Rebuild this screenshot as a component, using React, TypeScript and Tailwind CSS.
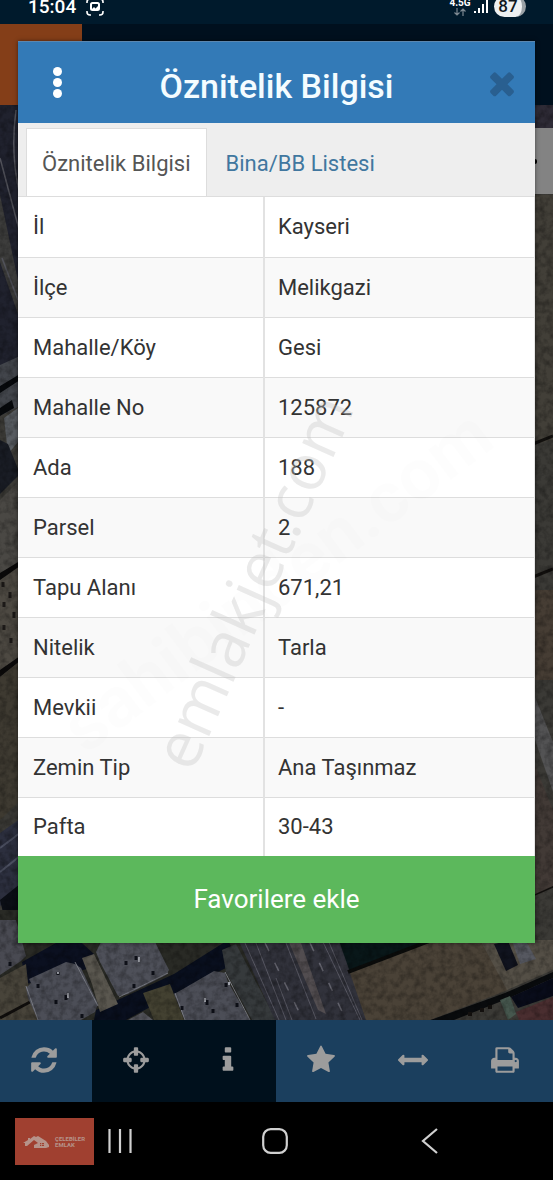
import React, { useState } from 'react';
import clsx from 'clsx';

const ICONS = {
    refresh: 'M1639 1056q0 5-1 7-64 268-268 434.5t-478 166.5q-146 0-282.5-55t-243.5-157l-129 129q-19 19-45 19t-45-19-19-45v-448q0-26 19-45t45-19h448q26 0 45 19t19 45-19 45l-137 137q71 66 161 102t187 36q134 0 250-65t186-179q11-17 53-117 8-23 30-23h192q13 0 22.5 9.5t9.5 22.5zm25-800v448q0 26-19 45t-45 19h-448q-26 0-45-19t-19-45 19-45l138-138q-148-137-349-137-134 0-250 65t-186 179q-11 17-53 117-8 23-30 23h-199q-13 0-22.5-9.5t-9.5-22.5v-7q65-268 270-434.5t480-166.5q146 0 284 55.5t245 156.5l130-129q19-19 45-19t45 19 19 45z',
    crosshairs: 'M1325 1024h-109q-26 0-45-19t-19-45v-128q0-26 19-45t45-19h109q-32-108-112.5-188.5t-188.5-112.5v109q0 26-19 45t-45 19h-128q-26 0-45-19t-19-45v-109q-108 32-188.5 112.5t-112.5 188.5h109q26 0 45 19t19 45v128q0 26-19 45t-45 19h-109q32 108 112.5 188.5t188.5 112.5v-109q0-26 19-45t45-19h128q26 0 45 19t19 45v109q108-32 188.5-112.5t112.5-188.5zm339-192v128q0 26-19 45t-45 19h-143q-37 161-154.5 278.5t-278.5 154.5v143q0 26-19 45t-45 19h-128q-26 0-45-19t-19-45v-143q-161-37-278.5-154.5t-154.5-278.5h-143q-26 0-45-19t-19-45v-128q0-26 19-45t45-19h143q37-161 154.5-278.5t278.5-154.5v-143q0-26 19-45t45-19h128q26 0 45 19t19 45v143q161 37 278.5 154.5t154.5 278.5h143q26 0 45 19t19 45z',
    info: 'M1216 1344v128q0 26-19 45t-45 19h-512q-26 0-45-19t-19-45v-128q0-26 19-45t45-19h64v-384h-64q-26 0-45-19t-19-45v-128q0-26 19-45t45-19h384q26 0 45 19t19 45v576h64q26 0 45 19t19 45zm-128-1152v192q0 26-19 45t-45 19h-256q-26 0-45-19t-19-45v-192q0-26 19-45t45-19h256q26 0 45 19t19 45z',
    star: 'M1728 647q0 22-26 48l-363 354 86 500q1 7 1 20 0 21-10.5 35.5t-30.5 14.5q-19 0-40-12l-449-236-449 236q-22 12-40 12-21 0-31.5-14.5t-10.5-35.5q0-6 2-20l86-500-364-354q-25-27-25-48 0-37 56-46l502-73 225-455q19-41 49-41t49 41l225 455 502 73q56 9 56 46z',
    arrows: 'M1792 896q0 26-19 45l-256 256q-19 19-45 19t-45-19-19-45v-128h-1024v128q0 26-19 45t-45 19-45-19l-256-256q-19-19-19-45t19-45l256-256q19-19 45-19t45 19 19 45v128h1024v-128q0-26 19-45t45-19 45 19l256 256q19 19 19 45z',
    print: 'M448 1536h896v-256h-896v256zm0-640h896v-384h-160q-40 0-68-28t-28-68v-160h-640v640zm1152 64q0-26-19-45t-45-19-45 19-19 45 19 45 45 19 45-19 19-45zm128 0v416q0 13-9.5 22.5t-22.5 9.5h-224v160q0 40-28 68t-68 28h-960q-40 0-68-28t-28-68v-160h-224q-13 0-22.5-9.5t-9.5-22.5v-416q0-79 56.5-135.5t135.5-56.5h64v-544q0-40 28-68t68-28h672q40 0 88 20t76 48l152 152q28 28 48 76t20 88v256h64q79 0 135.5 56.5t56.5 135.5z',
    times: 'M1490 1322q0 40-28 68l-136 136q-28 28-68 28t-68-28l-294-294-294 294q-28 28-68 28t-68-28l-136-136q-28-28-28-68t28-68l294-294-294-294q-28-28-28-68t28-68l136-136q28-28 68-28t68 28l294 294 294-294q28-28 68-28t68 28l136 136q28 28 28 68t-28 68l-294 294 294 294q28 28 28 68z',
};

const Icon: React.FC<{ name: keyof typeof ICONS; className?: string }> = ({ name, className }) => (
    <svg viewBox="0 0 1792 1792" fill="currentColor" aria-hidden="true" className={className}>
        <path d={ICONS[name]} />
    </svg>
);

const attributes = [
    { label: 'İl', value: 'Kayseri' },
    { label: 'İlçe', value: 'Melikgazi' },
    { label: 'Mahalle/Köy', value: 'Gesi' },
    { label: 'Mahalle No', value: '125872' },
    { label: 'Ada', value: '188' },
    { label: 'Parsel', value: '2' },
    { label: 'Tapu Alanı', value: '671,21' },
    { label: 'Nitelik', value: 'Tarla' },
    { label: 'Mevkii', value: '-' },
    { label: 'Zemin Tip', value: 'Ana Taşınmaz' },
    { label: 'Pafta', value: '30-43' },
];

const tools: { icon: keyof typeof ICONS; label: string; dark?: boolean }[] = [
    { icon: 'refresh', label: 'Yenile' },
    { icon: 'crosshairs', label: 'Konum', dark: true },
    { icon: 'info', label: 'Bilgi', dark: true },
    { icon: 'star', label: 'Favoriler' },
    { icon: 'arrows', label: 'Ölçüm' },
    { icon: 'print', label: 'Yazdır' },
];

const StatusBar = () => (
    <div className="flex h-6 items-start justify-between overflow-hidden bg-[#001a2c] pr-[27px] pl-7 text-white">
        <div className="flex items-start gap-[10px]">
            <span className="text-[19px] leading-[13px] font-medium">15:04</span>
            <svg viewBox="0 0 18 18" className="-mt-[2px] size-[18px]" fill="none" stroke="currentColor" strokeWidth="1.6">
                <path d="M1 5V4a3 3 0 0 1 3-3M14 1a3 3 0 0 1 3 3v1M17 13v1a3 3 0 0 1-3 3h-1M5 17H4a3 3 0 0 1-3-3v-1" />
                <rect x="5" y="5" width="8" height="7" rx="1.5" strokeWidth="2" />
                <path d="M6 11l2-2 1.500 1.500L12 8v4H6z" fill="currentColor" stroke="none" />
            </svg>
        </div>
        <div className="flex items-start">
            <div className="flex w-5 flex-col items-center">
                <span className="text-[10px] leading-[6px] font-bold">4.5G</span>
                <svg viewBox="0 0 12 8" className="mt-[2px] h-2 w-3" fill="none" stroke="#7d8992" strokeWidth="1.200">
                    <path d="M3 0v7M.5 4.500L3 7l2.500-2.500M9 8V1M6.500 3.500L9 1l2.500 2.500" />
                </svg>
            </div>
            <svg viewBox="0 0 14 14" className="ml-1 size-3.5" fill="currentColor">
                <path d="M0 11h2v2H0zM4 8h2v5H4zM8 4h2v9H8zM12 0h2v13h-2z" />
            </svg>
            <span className="-mt-1 ml-[6px] flex h-[21px] w-8 items-center justify-center rounded-full border-r-4 border-[#9aa1a6] bg-[#eef0f1] text-[17px] font-medium text-[#10181e]">
                87
            </span>
        </div>
    </div>
);

const SatelliteMap = () => (
    <svg viewBox="0 105 553 915" preserveAspectRatio="xMidYMax slice" aria-hidden="true" className="absolute inset-0 size-full">
        <defs>
            <filter id="grain" x="0" y="0" width="100%" height="100%">
                <feTurbulence type="fractalNoise" baseFrequency="0.15" numOctaves="3" seed="4" />
                <feColorMatrix values="0 0 0 0 0  0 0 0 0 0  0 0 0 0 0  1.6 0 0 0 -0.6" />
            </filter>
        </defs>
        <rect y="105" width="553" height="915" fill="#3b3a36" />

        {/* left edge */}
        <path d="M0 105h20v250L0 375z" fill="#20222e" />
        <path d="M0 195l20 95v30L0 262z" fill="#3d3d3c" />
        <path d="M16 110Q10 155 20 195M0 158l20 75M2 258l16 42" stroke="#52535b" strokeWidth="1.500" fill="none" />
        <path d="M0 365l20-9v50L0 416z" fill="#42454b" />
        <path d="M0 386l20-12v6L0 393zM0 408l12-8 2 8-14 8z" fill="#07090c" />
        <path d="M4 418l14-10v34l-10 12z" fill="#5a5e63" />
        <path d="M0 440l8 4 12 30-20 20z" fill="#191c24" />
        <path d="M0 500l20-20v80L0 575z" fill="#4a4844" />
        <path d="M0 575l20-12v94L0 672z" fill="#4d4942" />
        <path d="M0 573l20-12v5L0 580zM0 670l20-14v5L0 677z" fill="#0b0a0a" />
        <path d="M3 582v5M10 592v6M4 602v5M14 612v6M4 625v5M11 638v5" stroke="#1d1a18" strokeWidth="3" />
        <path d="M0 677l20-16v140L0 820z" fill="#3e3a31" />
        <path d="M0 833l20-14v72L0 906z" fill="#2c2f3e" />
        <path d="M0 848l20-15M0 872l20-16" stroke="#4b4f60" strokeWidth="2" />
        <path d="M0 900l20-16v30L6 925z" fill="#0b0e15" />

        {/* right edge */}
        <path d="M533 105h20v23h-20z" fill="#2e2b36" />
        <path d="M533 195h20v245l-20 4z" fill="#423f38" />
        <path d="M533 444l20-8M533 577l20-8M533 895l20-9" stroke="#12100e" strokeWidth="3" />
        <path d="M533 590h20v90h-20z" fill="#463d34" />
        <path d="M533 692l20 50v50l-20-58z" fill="#535354" />
        <path d="M533 760l20 50v76l-20 9z" fill="#423a36" />

        {/* blocks and yards under the dialog */}
        <path d="M0 910h240l40 110H0z" fill="#292a25" />
        <path d="M22 962l50-28 22 20-3 14-65 16z" fill="#0b1020" />
        <path d="M96 1010l78-36 54-34 10 22-56 28-56 30H94z" fill="#090f1e" />
        <path d="M0 978l26-14 3 28 12 28H0z" fill="#48443a" />
        <path d="M0 1018l30-16" stroke="#100e0c" strokeWidth="3" />
        <path d="M82 958l12-4 24 50-18 8-8-28z" fill="#5a574f" />
        <path d="M143 993l27-9 14 36h-30z" fill="#434131" />
        <path d="M0 920h16l10 36-5 5-21 14z" fill="#494a52" />
        <path d="M26 988l5-5-2-4 37-17 9 2 6 4 17 36-3 8-14 8H38l-10-22z" fill="#4c4e57" />
        <path d="M96 952l5-10h54l14 28-3 5-38 19-10 2-18-34z" fill="#4e5059" />
        <path d="M174 994l9-5 31-18 11 2 3 9 22 38h-65z" fill="#4c4e57" />
        <path d="M128 1020l15-8 10 8z" fill="#55565d" />
        <path d="M75 962l23 44M119 997l49-24M225 972l25 48M26 986l12 34M175 993l10 27" stroke="#7b7d85" strokeWidth="1" fill="none" />
        <path d="M10 962v4M38 984v4M56 1000v4M66 995v5M82 1014v4M58 972v3M126 961v4M136 956v4M153 971v4M134 984v4M207 1000v5M213 1009v4M226 983v4M237 1003v4M182 1006v4" stroke="#0e1018" strokeWidth="3" />
        <path d="M68 993v5M139 957v5M205 998v4M229 982v3M58 972v2" stroke="#a0a3ab" strokeWidth="2" />
        <path d="M222 950l14-6 40 76h-24l-26-48z" fill="#363a3c" />

        {/* motorway */}
        <path d="M236 935h100l18 40 12 45h-91z" fill="#31323b" />
        <path d="M288 940h12l26 74-8-4z" fill="#524d50" />
        <path d="M245 943l34 77M256 943l30 77M276 978l16 42M322 940l38 80M328 940l34 80M286 943l30 76" stroke="#585863" strokeWidth="1" fill="none" />
        <path d="M265 943l38 77M310 943l36 77" stroke="#666670" strokeWidth="1.500" strokeDasharray="9 13" fill="none" />

        {/* fields */}
        <path d="M338 938h100l-88 34z" fill="#091719" />
        <path d="M350 973l80-31h54l24 48-78 30h-64z" fill="#4a4237" />
        <path d="M480 940h73v30l-46 20z" fill="#544f46" />
        <path d="M348 972l84-32" stroke="#0b0c0b" strokeWidth="4" />
        <path d="M494 944l14-3 10 24-12 6z" fill="#10131e" />
        <path d="M512 941h14l10 18-16 5z" fill="#565860" />
        <path d="M425 1022l80-29 48-21v6l-46 21-58 23z" fill="#090b0d" />
        <path d="M511 997l42-19v18l-35 12z" fill="#090c1a" />
        <path d="M516 1012l37-15v23h-34z" fill="#4a2e30" />
        <path d="M500 1000l10-4 6 18-8 6z" fill="#46574e" />
        <path d="M470 1012v4M482 1008v4M490 1005v4" stroke="#14110f" strokeWidth="4" />

        <rect y="105" width="553" height="915" filter="url(#grain)" opacity=".4" />
    </svg>
);

const Watermarks = () => (
    <div className="pointer-events-none absolute inset-0 overflow-hidden select-none" aria-hidden="true">
        <span className="absolute top-[540px] left-1/2 -translate-x-1/2 -translate-y-1/2 -rotate-37 text-[72px] leading-none font-bold text-black/[0.008]">
            sahibinden.com
        </span>
        <span className="absolute top-[540px] left-[234px] -translate-x-1/2 -translate-y-1/2 -rotate-66 font-['Open_Sans',sans-serif] text-[64px] leading-none text-[#c4c4c4]/35">
            emlakjet.com
        </span>
    </div>
);

const AttributeDialog = () => {
    const [tab, setTab] = useState<'info' | 'list'>('info');

    const tabClass = (active: boolean) =>
        clsx(
            'border border-b-0 px-[15px] pt-[2px] text-[22px]',
            active ? 'border-[#dddddd] bg-white text-[#555555]' : 'border-transparent text-[#41779f]'
        );

    return (
        <div role="dialog" aria-labelledby="dialog-title" className="absolute inset-x-[18px] top-[41px] bg-white shadow-[0_0_4px_rgba(0,0,0,0.5)]">
            <div className="grid h-[82px] grid-cols-[78px_1fr_78px] items-center border-t border-[#5b87b0] bg-[#337ab7]">
                <button aria-label="Menü" className="flex flex-col items-center gap-[2px]">
                    <span className="size-[9px] rounded-full bg-white" />
                    <span className="size-[9px] rounded-full bg-white" />
                    <span className="size-[9px] rounded-full bg-white" />
                </button>
                <h1 id="dialog-title" className="pt-2 text-center text-[34px] font-medium text-[#f4fcff]">Öznitelik Bilgisi</h1>
                <button aria-label="Kapat" className="flex justify-end pr-[15px] text-[#295f90]">
                    <Icon name="times" className="size-9" />
                </button>
            </div>

            <div role="tablist" className="flex h-[74px] gap-[3px] border-b border-[#dddddd] bg-[#eeeeee] px-2 pt-[5px]">
                <button role="tab" aria-selected={tab === 'info'} onClick={() => setTab('info')} className={tabClass(tab === 'info')}>
                    Öznitelik Bilgisi
                </button>
                <button role="tab" aria-selected={tab === 'list'} onClick={() => setTab('list')} className={tabClass(tab === 'list')}>
                    Bina/BB Listesi
                </button>
            </div>

            <table className="w-full table-fixed text-left text-[22px] text-[#333333]">
                <tbody>
                    {attributes.map((row) => (
                        <tr key={row.label} className="h-[60px] border-b border-[#dddddd] last:h-[59px] last:border-0 even:bg-[#f9f9f9]">
                            <th scope="row" className="w-[246px] border-r-2 border-[#e2e2e2] pl-[15px] font-normal">{row.label}</th>
                            <td className="border-r border-[#e6e6e6] pl-[13px]">{row.value}</td>
                        </tr>
                    ))}
                </tbody>
            </table>

            <button className="block h-[87px] w-full bg-[#5cb85c] text-[26px] text-white">Favorilere ekle</button>
            <Watermarks />
        </div>
    );
};

const NavigationBar = () => (
    <nav className="relative grid h-[78px] grid-cols-3 items-center bg-black pr-[46px] pl-[43px] text-[#d0d0d0]">
        <button aria-label="Son uygulamalar" className="flex justify-center">
            <svg viewBox="0 0 24 24" className="size-6" stroke="currentColor" strokeWidth="2.200">
                <path d="M1.500 0v24M12 0v24M22.500 0v24" />
            </svg>
        </button>
        <button aria-label="Ana ekran" className="flex justify-center">
            <svg viewBox="0 0 26 26" className="size-[26px]" fill="none" stroke="currentColor" strokeWidth="2.200">
                <rect x="1.200" y="1.200" width="23.600" height="23.600" rx="7.500" />
            </svg>
        </button>
        <button aria-label="Geri" className="flex justify-center">
            <svg viewBox="0 0 17 26" className="h-[26px] w-[17px]" fill="none" stroke="currentColor" strokeWidth="2.200">
                <path d="M16 1L2 13l14 12" />
            </svg>
        </button>
        <div className="absolute top-4 left-[15px] flex h-[47px] w-[79px] items-center gap-[6px] bg-[#a04030] pl-2 text-[#b6938a]">
            <svg viewBox="0 0 26 14" className="h-3.5 w-[26px]" fill="currentColor">
                <path d="M0 8l5-3V3h2v1l4-3 2 1 2-1 8 5 3 4v2l-3 1H11v-3l4-2-4-3-7 6H2V8z" />
                <path d="M17 8h4v3h-4z" fill="#a04030" />
                <path d="M18.500 8v3M17 9.500h4" stroke="currentColor" strokeWidth=".7" />
            </svg>
            <span className="text-[6px] leading-[6px] font-bold">
                ÇELEBİLER
                <br />
                EMLAK
            </span>
        </div>
    </nav>
);

export default function App() {
    return (
        <div className="relative flex min-h-screen flex-col bg-black font-[Roboto,sans-serif]">
            <StatusBar />
            <header className="h-[81px] bg-[#00101e]">
                <div className="h-full w-[82px] bg-[#843e18]" />
            </header>
            <main className="relative min-h-[915px] flex-1 overflow-hidden">
                <SatelliteMap />
                <div className="absolute top-[23px] right-0 flex h-[66px] w-[18px] items-center bg-[#838383]">
                    <span className="h-[5px] w-[2px] rounded-r-full bg-black" />
                </div>
            </main>
            <div className="grid h-[82px] grid-cols-6 text-[#9c9c9c]">
                {tools.map((tool) => (
                    <button
                        key={tool.icon}
                        aria-label={tool.label}
                        className={clsx('flex items-center justify-center pr-1 pb-[2px]', tool.dark ? 'bg-[#00101c]' : 'bg-[#1b3f5e]')}
                    >
                        <Icon name={tool.icon} className="size-[30px]" />
                    </button>
                ))}
            </div>
            <NavigationBar />
            <AttributeDialog />
        </div>
    );
}
